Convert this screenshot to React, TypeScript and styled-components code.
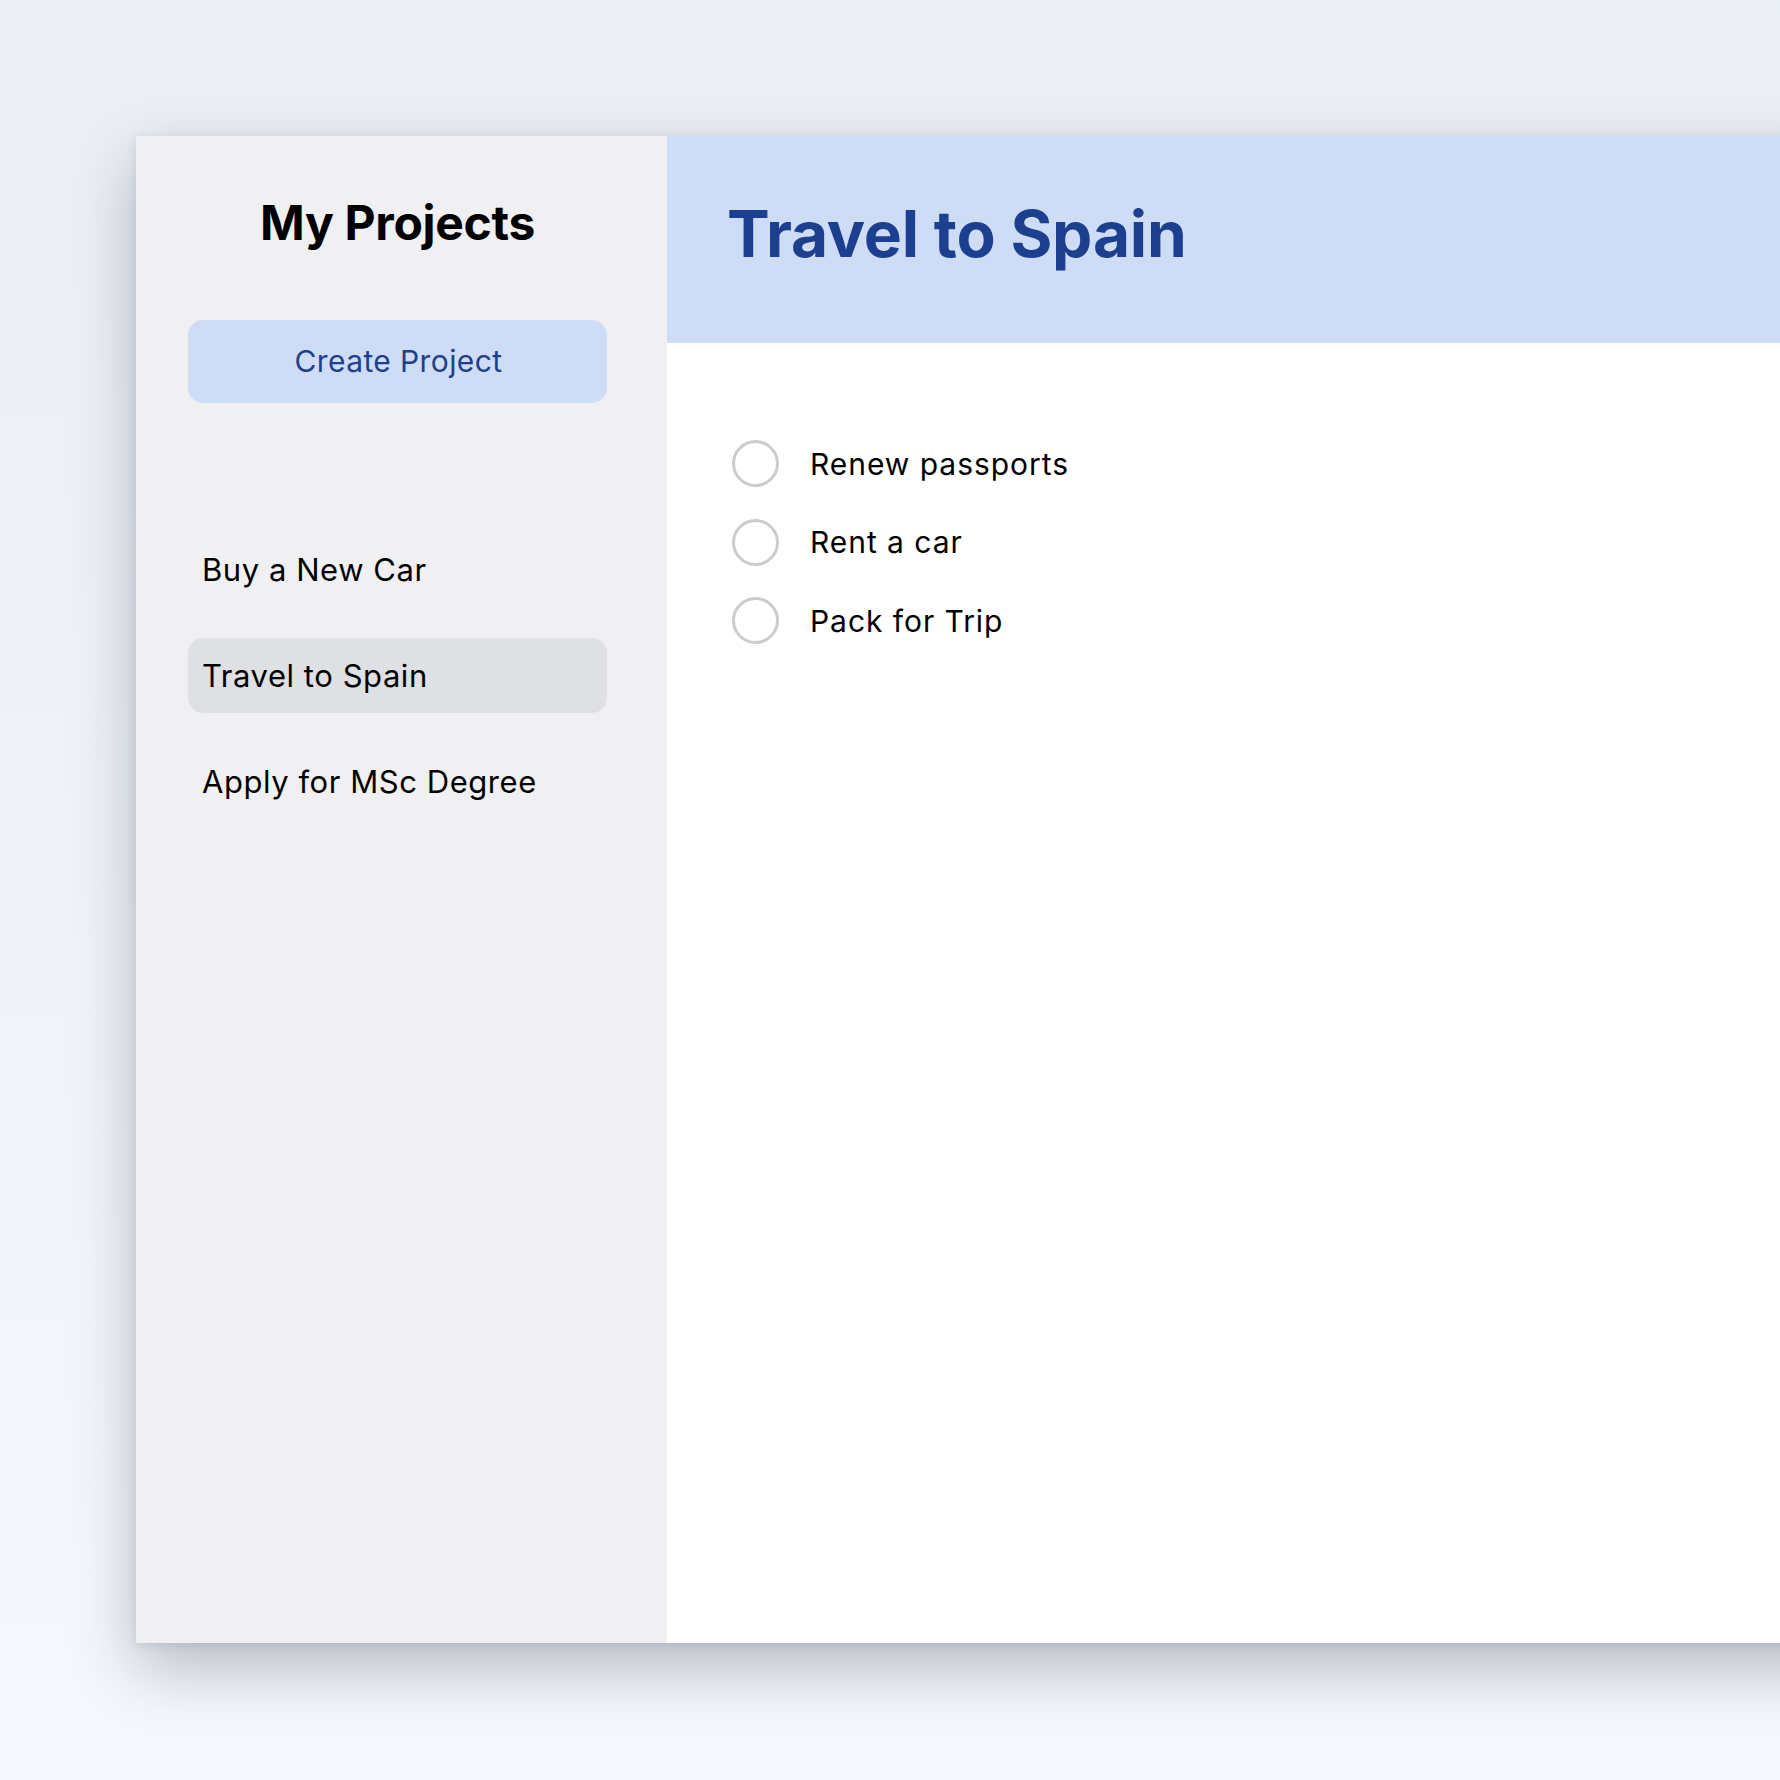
import React from "react";
import styled, { createGlobalStyle } from "styled-components";

const GlobalStyle = createGlobalStyle`
  html, body {
    margin: 0;
    padding: 0;
    width: 100%;
    height: 100%;
    overflow: hidden;
  }
  body {
    font-family: Inter, "Noto Sans", "Liberation Sans", sans-serif;
    background: linear-gradient(180deg, #eaeef5 0%, #eff2f8 45%, #f5f8fc 100%);
    -webkit-font-smoothing: antialiased;
  }
  #root {
    width: 100%;
    height: 100%;
  }
`;

const Page = styled.div`
  width: 100%;
  height: 100%;
  padding: 136px 0 0 136px;
  box-sizing: border-box;
`;

const Card = styled.div`
  display: flex;
  width: 1760px;
  height: 1507px;
  background: #ffffff;
  box-shadow: 0 26px 60px rgba(30, 41, 59, 0.28), 0 2px 10px rgba(30, 41, 59, 0.1);
`;

const Sidebar = styled.aside`
  width: 531px;
  flex-shrink: 0;
  box-sizing: border-box;
  background: #f0f0f2;
  padding: 58px 60px 0 52px;
  display: flex;
  flex-direction: column;
`;

const SidebarTitle = styled.h2`
  margin: 0;
  font-size: 48px;
  line-height: 1.2;
  font-weight: 700;
  color: #000;
  text-align: center;
  letter-spacing: -0.3px;
`;

const CreateButton = styled.button`
  margin-top: 68px;
  height: 83px;
  width: 100%;
  border: none;
  border-radius: 15px;
  background: #cfdcf6;
  color: #1f3f8c;
  font-family: inherit;
  font-size: 30px;
  font-weight: 400;
  letter-spacing: 0.4px;
  padding: 0 0 0 2px;
  cursor: pointer;
`;

const ProjectList = styled.ul`
  list-style: none;
  margin: 129px 0 0;
  padding: 0;
  display: flex;
  flex-direction: column;
  gap: 31px;
`;

const ProjectItem = styled.li<{ $active?: boolean }>`
  height: 75px;
  display: flex;
  align-items: center;
  padding: 0 14px;
  border-radius: 15px;
  background: ${(p) => (p.$active ? "#dfe0e4" : "transparent")};
  font-size: 31px;
  letter-spacing: 0.55px;
  color: #000;
`;

const Main = styled.main`
  flex: 1;
  display: flex;
  flex-direction: column;
`;

const Header = styled.header`
  height: 207px;
  box-sizing: border-box;
  background: #cfdcf6;
  padding: 60px 64px 0 60px;
`;

const Title = styled.h1`
  margin: 0;
  font-size: 64px;
  line-height: 1.2;
  font-weight: 700;
  color: #1c3f8f;
  letter-spacing: -0.2px;
`;

const TaskList = styled.ul`
  list-style: none;
  margin: 0;
  padding: 97px 64px 0 65px;
  display: flex;
  flex-direction: column;
  gap: 31.5px;
`;

const Task = styled.li`
  display: flex;
  align-items: center;
  gap: 31px;
  height: 47px;
  font-size: 30px;
  letter-spacing: 0.95px;
  color: #000;
`;

const Circle = styled.span`
  width: 47px;
  height: 47px;
  box-sizing: border-box;
  border-radius: 50%;
  border: 3px solid #cccccc;
  flex-shrink: 0;
`;

const projects = [
  { name: "Buy a New Car" },
  { name: "Travel to Spain", active: true },
  { name: "Apply for MSc Degree" },
];

const tasks = ["Renew passports", "Rent a car", "Pack for Trip"];

export default function App() {
  return (
    <>
      <GlobalStyle />
      <Page>
        <Card>
          <Sidebar>
            <SidebarTitle>My Projects</SidebarTitle>
            <CreateButton>Create Project</CreateButton>
            <ProjectList>
              {projects.map((p) => (
                <ProjectItem key={p.name} $active={p.active}>
                  {p.name}
                </ProjectItem>
              ))}
            </ProjectList>
          </Sidebar>
          <Main>
            <Header>
              <Title>Travel to Spain</Title>
            </Header>
            <TaskList>
              {tasks.map((t) => (
                <Task key={t}>
                  <Circle />
                  {t}
                </Task>
              ))}
            </TaskList>
          </Main>
        </Card>
      </Page>
    </>
  );
}
